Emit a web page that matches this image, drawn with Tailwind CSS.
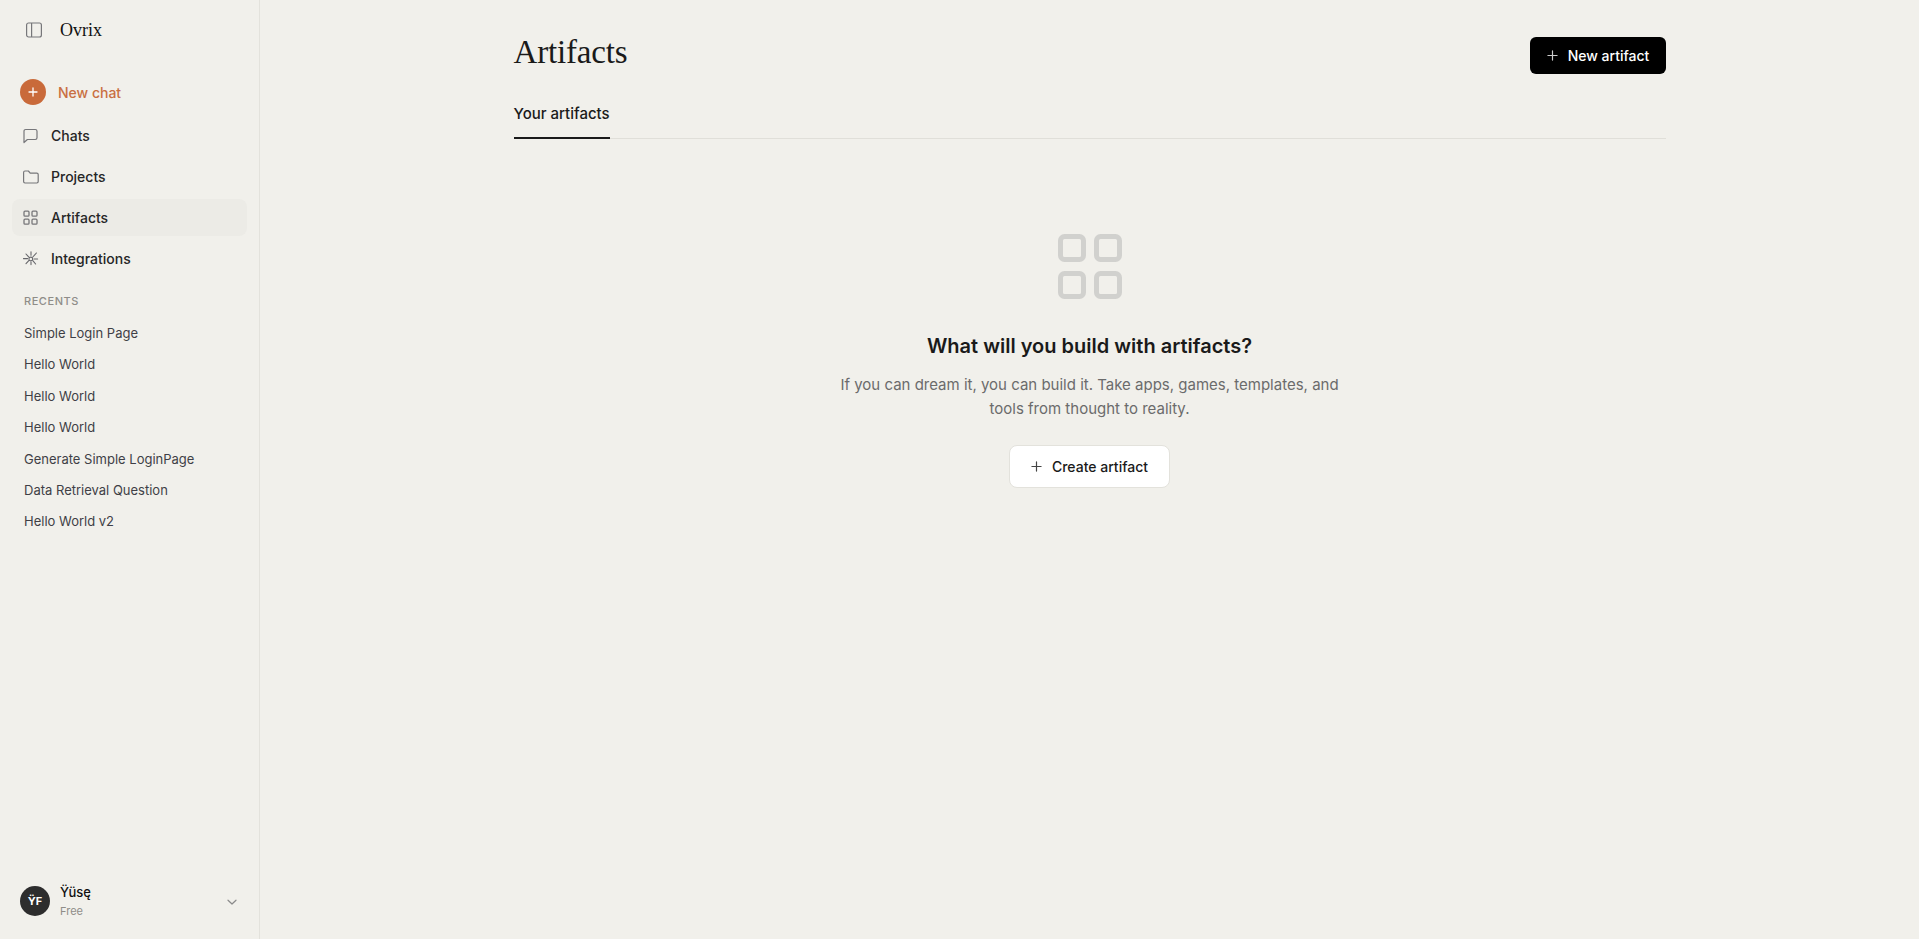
<!DOCTYPE html>
<html lang="en">
    <head>
        <meta charset="UTF-8" />
        <meta name="viewport" content="width=device-width, initial-scale=1.0" />
        <title>Artifacts - Ovrix</title>
        <script src="https://cdn.jsdelivr.net/npm/@tailwindcss/browser@4"></script>
    </head>
    <body class="bg-[#f1f0eb] font-[Inter,sans-serif] text-[#1a1a1a]">
        <div class="flex h-[939px] overflow-hidden">
            <!-- sidebar -->
            <aside class="flex flex-col w-[260px] shrink-0 h-full border-r border-[#e3e2dc]">
                <div class="flex items-center h-[30px] mt-[15px] pl-[26px]">
                    <svg class="size-[16px] text-[#77777a]" viewBox="0 0 16 16" fill="none" stroke="currentColor" stroke-width="1.2">
                        <rect x="0.6" y="1" width="14.8" height="14" rx="2"/>
                        <path d="M5.6 1v14"/>
                    </svg>
                    <span class="ml-[18px] font-['Liberation_Serif',serif] text-[18px] text-[#111]">Ovrix</span>
                </div>
                <a class="flex items-center mt-[34px] ml-[20px] h-[26px] gap-[12px]">
                    <span class="flex items-center justify-center size-[26px] rounded-full bg-[#c96a3a]">
                        <svg class="size-[12px]" viewBox="0 0 12 12" fill="none" stroke="#fff" stroke-width="1.3" stroke-linecap="round"><path d="M6 2v8M2 6h8"/></svg>
                    </span>
                    <span class="text-[14px] font-medium text-[#c96f42]">New chat</span>
                </a>
                <nav class="flex flex-col mt-[12px] mx-[12px] gap-[4px] text-[14px] font-medium text-[#262626]">
                    <a class="flex items-center gap-[12px] h-[37px] pl-[11px] rounded-[8px]">
                        <svg class="size-[16px] text-[#77777a]" viewBox="0 0 16 16" fill="none" stroke="currentColor" stroke-width="1.2" stroke-linejoin="round">
                            <path d="M1 14.5V3.2c0-.9.7-1.7 1.7-1.7h9.6c1 0 1.7.8 1.7 1.7v6.6c0 1-.7 1.7-1.7 1.7H4.4z"/>
                        </svg>
                        Chats
                    </a>
                    <a class="flex items-center gap-[12px] h-[37px] pl-[11px] rounded-[8px]">
                        <svg class="size-[16px] text-[#77777a]" viewBox="0 0 16 16" fill="none" stroke="currentColor" stroke-width="1.2" stroke-linejoin="round">
                            <path d="M.6 3.4c0-.8.6-1.4 1.4-1.4h3.4l1.8 2.2h6.6c.8 0 1.4.6 1.4 1.4v7c0 .8-.6 1.4-1.4 1.4H2c-.8 0-1.4-.6-1.4-1.4z"/>
                        </svg>
                        Projects
                    </a>
                    <a class="flex items-center gap-[12px] h-[37px] pl-[11px] rounded-[8px] bg-[#ecebe6]">
                        <svg class="size-[16px] text-[#77777a]" viewBox="0 0 16 16" fill="none" stroke="currentColor" stroke-width="1.3">
                            <rect x="1" y="1.2" width="5" height="5" rx="1"/>
                            <rect x="9" y="1.2" width="5" height="5" rx="1"/>
                            <rect x="1" y="9.2" width="5" height="5" rx="1"/>
                            <rect x="9" y="9.2" width="5" height="5" rx="1"/>
                        </svg>
                        Artifacts
                    </a>
                    <a class="flex items-center gap-[12px] h-[37px] pl-[11px] rounded-[8px]">
                        <svg class="size-[16px] text-[#66666a]" viewBox="0 0 16 16" fill="none" stroke="currentColor" stroke-width="1.1" stroke-linecap="round">
                            <circle cx="7.8" cy="8" r="1.9"/>
                            <path d="M8 .8v3.4M3 3l2.6 2.8M13.4 2l-3.6 4M.4 7.6h4.2M11 8h3.6M3 12.6l2.8-3M12.6 13l-2.8-3.4M8 11v2.6"/>
                        </svg>
                        Integrations
                    </a>
                </nav>
                <p class="mt-[16px] pl-[24px] text-[11px] leading-[16px] font-medium tracking-[0.05em] text-[#8f8d88]">RECENTS</p>
                <ul class="flex flex-col mt-[9px] pl-[24px] text-[13px] leading-[31.4px] text-[#3f3f46]">
                    <li>Simple Login Page</li>
                    <li>Hello World</li>
                    <li>Hello World</li>
                    <li>Hello World</li>
                    <li>Generate Simple LoginPage</li>
                    <li>Data Retrieval Question</li>
                    <li>Hello World v2</li>
                </ul>
                <div class="flex items-center mt-auto mb-[20px] pl-[20px] pr-[24px]">
                    <span class="flex items-center justify-center size-[30px] rounded-full bg-[#2d2d2d] text-white text-[11px] font-bold">ŸF</span>
                    <div class="ml-[10px]">
                        <p class="text-[13px] leading-[18px] font-medium text-[#111]">Ÿüsę</p>
                        <p class="text-[11px] leading-[16px] mt-[2px] text-[#8f8d88]">Free</p>
                    </div>
                    <svg class="ml-auto -mr-[3px] mt-[2px] size-[12px] text-[#8a8a8a]" viewBox="0 0 12 12" fill="none" stroke="currentColor" stroke-width="1.2" stroke-linecap="round" stroke-linejoin="round"><path d="M2 4.2l4 3.8 4-3.8"/></svg>
                </div>
            </aside>

            <!-- main -->
            <main class="flex-1 min-w-0">
                <div class="mx-auto w-[1152px] pt-[30px]">
                    <header class="flex items-start justify-between">
                        <h1 class="font-['Liberation_Serif',serif] text-[33px] tracking-[-0.17px] leading-[44px] font-normal text-[#1a1a1a]">Artifacts</h1>
                        <button class="flex items-center justify-center gap-[10px] mt-[7px] pl-px w-[136px] h-[37px] rounded-[6px] bg-black text-white text-[14px] font-medium">
                            <svg class="size-[11px] text-[#ccc]" viewBox="0 0 12 12" fill="none" stroke="currentColor" stroke-width="1.3" stroke-linecap="round"><path d="M6 1v10M1 6h10"/></svg>
                            New artifact
                        </button>
                    </header>
                    <div class="flex mt-[28px] border-b border-[#e0dfd9]">
                        <span class="pb-[11px] -mb-px border-b-2 border-[#1a1a1a] text-[15px] leading-[24px] font-medium">Your artifacts</span>
                    </div>
                    <section class="flex flex-col items-center mt-[95px]">
                        <svg class="w-[64px] h-[66px] text-[#d1d1ce]" viewBox="0 0 64 66" fill="none" stroke="currentColor" stroke-width="5">
                            <rect x="2.5" y="2.5" width="23" height="23" rx="4"/>
                            <rect x="38.5" y="2.5" width="23" height="23" rx="4"/>
                            <rect x="2.5" y="39.5" width="23" height="23" rx="4"/>
                            <rect x="38.5" y="39.5" width="23" height="23" rx="4"/>
                        </svg>
                        <h2 class="mt-[31px] text-[20px] leading-[30px] font-semibold">What will you build with artifacts?</h2>
                        <p class="mt-[12px] w-[520px] text-center text-[15px] leading-[24px] text-[#6b6b6b]">If you can dream it, you can build it. Take apps, games, templates, and<br>tools from thought to reality.</p>
                        <button class="flex items-center justify-center gap-[10px] mt-[24px] w-[161px] h-[43px] rounded-[8px] bg-white border border-[#e3e2dc] text-[14px] font-medium">
                            <svg class="size-[11px] text-[#444]" viewBox="0 0 12 12" fill="none" stroke="currentColor" stroke-width="1.3" stroke-linecap="round"><path d="M6 1v10M1 6h10"/></svg>
                            Create artifact
                        </button>
                    </section>
                </div>
            </main>
        </div>
    </body>
</html>
